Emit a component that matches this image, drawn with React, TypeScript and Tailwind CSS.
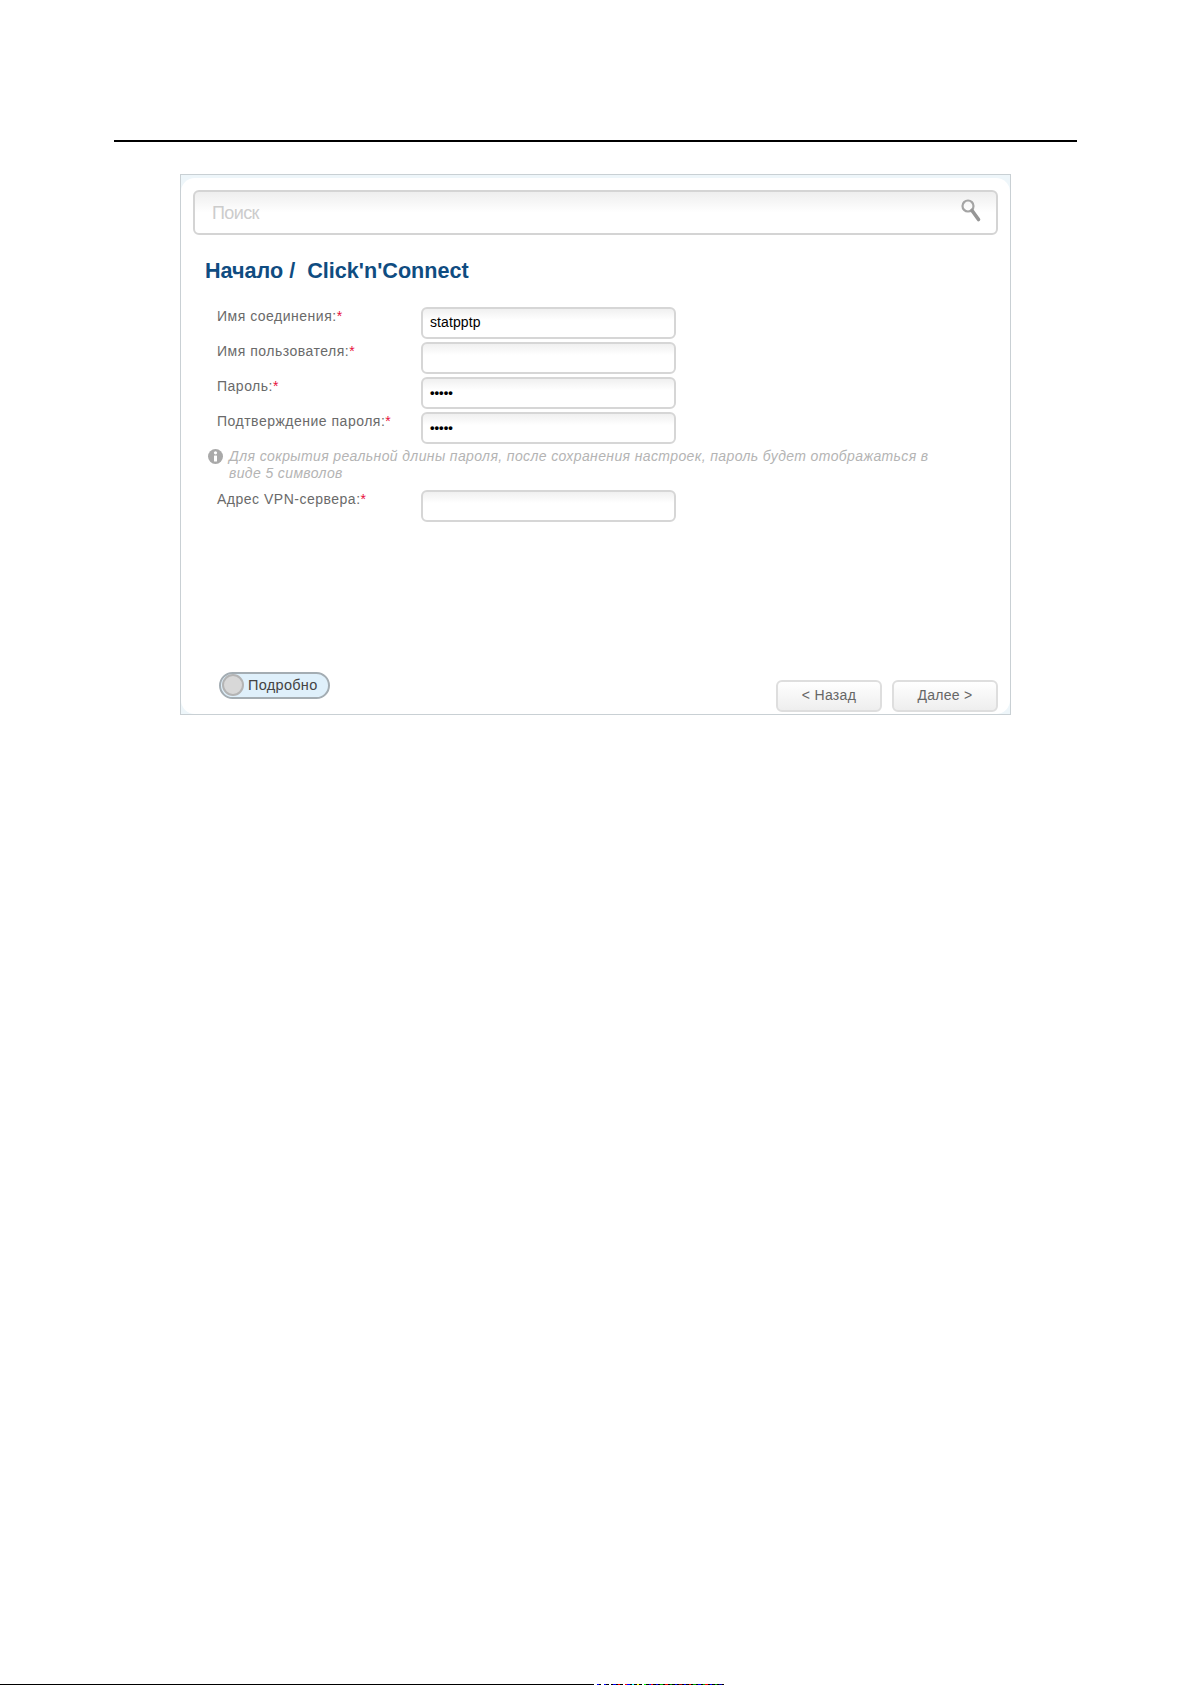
const labelFont = "font-['Liberation_Sans',Arial,sans-serif]";

// colour noise at the end of the scan line along the bottom edge
const noise = [
  "#000", "#fff", "#00f", "#000", "#fff", "#00f", "#000", "#fff", "#000", "#00f", "#000", "#f00", "#000", "#fff", "#f00", "#00f",
  "#000", "#0ff", "#000", "#ff0", "#000", "#fff", "#0f0", "#000", "#00f", "#f00", "#000", "#00f", "#000", "#0a0", "#000", "#f00",
  "#000", "#080", "#000", "#00f", "#000", "#a00", "#000", "#00f", "#000", "#f00", "#000", "#0a0", "#000", "#00f", "#000", "#0a0",
  "#f00", "#000", "#00f", "#000", "#0a0", "#000", "#00a", "#000",
];

function Field({ label, value, dots }: { label: string; value?: string; dots?: boolean }) {
  return (
    <div className="flex h-[31px] items-start">
      <div className="w-[216px] pt-[1px] pl-[12px] text-[14px] leading-[16px] tracking-[0.5px] text-[#6a6a6a]">
        {label}:<span className="text-[#e8103c]">*</span>
      </div>
      <div className="flex h-[32px] w-[255px] items-center rounded-[6px] border-2 border-[#d6d6d6] bg-gradient-to-b from-[#f0f0f0] via-white via-40% to-white px-[7px] text-[14px] tracking-[0.1px] text-black">
        {dots ? <span className="text-[13px] leading-none font-bold tracking-[0px]">•••••</span> : value}
      </div>
    </div>
  );
}

function SearchIcon() {
  return (
    <svg className="mb-[3px]" width="22" height="25" viewBox="0 0 22 25" fill="none">
      <circle cx="8" cy="8" r="5.5" stroke="#a4a4a4" strokeWidth="2.2" />
      <path d="M12 12.5 L18.5 21.5" stroke="#969696" strokeWidth="3.6" strokeLinecap="round" />
    </svg>
  );
}

function InfoIcon() {
  return (
    <div className="mt-[1px] mr-[6px] flex h-[15px] w-[15px] shrink-0 items-center justify-center rounded-full bg-[#a9a9a9]">
      <svg width="15" height="15" viewBox="0 0 15 15">
        <circle cx="7.5" cy="3.8" r="1.6" fill="#fff" />
        <rect x="6" y="6.4" width="3" height="6" rx="0.5" fill="#fff" />
      </svg>
    </div>
  );
}

function NavButton({ children }: { children: React.ReactNode }) {
  return (
    <button className="flex h-[32px] w-[106px] items-center justify-center rounded-[6px] border-2 border-[#dedede] bg-gradient-to-b from-white to-[#eeeeee] text-[14px] tracking-[0.3px] text-[#666]">
      {children}
    </button>
  );
}

export default function App() {
  return (
    <div className={`h-[1685px] w-[1191px] overflow-hidden bg-white ${labelFont}`}>
      <div className="flex h-full flex-col">
        <div className="mt-[140px] ml-[114px] h-[1.5px] w-[963px] bg-black" />

        <div className="mt-[32px] ml-[180px] flex h-[541px] w-[831px] flex-col rounded-none border border-[#c9d0d4] bg-[#eef6fa]">
          <div className="mt-[3px] flex flex-1 flex-col rounded-[14px] bg-white px-[12px] pt-[12px] pb-[2px]">
            <div className="flex h-[45px] items-center justify-between rounded-[6px] border-2 border-[#d4d4d4] bg-gradient-to-b from-[#eeeeee] via-white via-50% to-white pr-[14px] pl-[17px]">
              <span className="pt-[2px] text-[18px] tracking-[-0.6px] text-[#cccccc]">Поиск</span>
              <SearchIcon />
            </div>

            <h1 className="mt-[22px] ml-[12px] text-[21.6px] leading-[28px] font-bold text-[#0f4c81]">
              Начало /&nbsp; Click'n'Connect
            </h1>

            <div className="mt-[22px] flex flex-col gap-[4px] pl-[12px]">
              <Field label="Имя соединения" value="statpptp" />
              <Field label="Имя пользователя" />
              <Field label="Пароль" dots />
              <Field label="Подтверждение пароля" dots />
            </div>

            <div className="mt-[5px] flex pl-[15px]">
              <InfoIcon />
              <p className="w-[716px] text-[14px] leading-[17px] tracking-[0.38px] text-[#b4b4b4] italic">
                Для сокрытия реальной длины пароля, после сохранения настроек, пароль будет отображаться в виде 5 символов
              </p>
            </div>

            <div className="mt-[8px] pl-[12px]">
              <Field label="Адрес VPN-сервера" />
            </div>

            <div className="mt-auto flex items-end justify-between">
              <div className="mb-[13px] ml-[26px] flex h-[27px] w-[111px] items-center rounded-full border-2 border-[#a4adb3] bg-[#dff0fb] pl-[1px]">
                <span className="h-[22px] w-[22px] rounded-full border-2 border-[#b4b4b4] bg-[#d8d8d8]" />
                <span className="mt-[1px] ml-[4px] text-[14.5px] tracking-[0.3px] text-[#444]">Подробно</span>
              </div>
              <div className="flex gap-[10px]">
                <NavButton>&lt; Назад</NavButton>
                <NavButton>Далее &gt;</NavButton>
              </div>
            </div>
          </div>
        </div>

        <div className="mt-auto flex h-[1px] w-[724px]">
          <div className="w-[592px] bg-black" />
          {noise.map((color, i) => (
            <span key={i} className="flex-1" style={{ backgroundColor: color }} />
          ))}
        </div>
      </div>
    </div>
  );
}
